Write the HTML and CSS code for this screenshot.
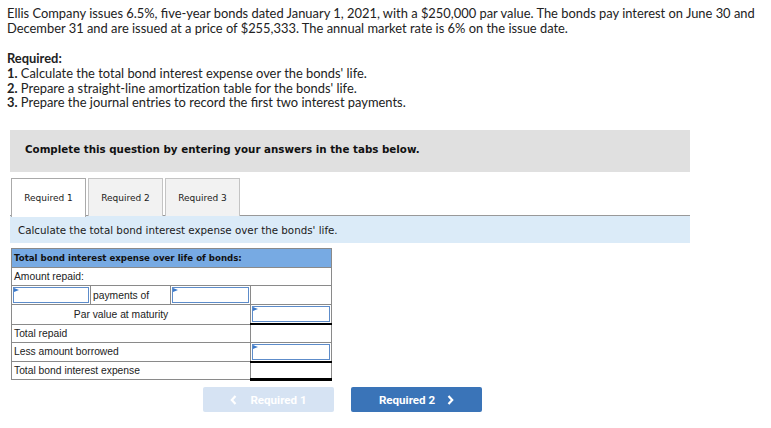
FILE: index.html
```html
<!DOCTYPE html>
<html>
<head>
<meta charset="utf-8">
<link rel="stylesheet" href="styles.css">
</head>
<body>
<div class="page">
  <p class="intro">Ellis Company issues 6.5%, five-year bonds dated January 1, 2021, with a $250,000 par value. The bonds pay interest on June 30 and December 31 and are issued at a price of $255,333. The annual market rate is 6% on the issue date.</p>
  <div class="required">
    <div class="req-title">Required:</div>
    <div><b>1.</b> Calculate the total bond interest expense over the bonds' life.</div>
    <div><b>2.</b> Prepare a straight-line amortization table for the bonds' life.</div>
    <div><b>3.</b> Prepare the journal entries to record the first two interest payments.</div>
  </div>

  <div class="panel">
    <div class="instructions">Complete this question by entering your answers in the tabs below.</div>
    <div class="tabs">
      <div class="tab active">Required 1</div>
      <div class="tab">Required 2</div>
      <div class="tab">Required 3</div>
    </div>
    <div class="band">Calculate the total bond interest expense over the bonds' life.</div>

    <table class="grid">
      <colgroup><col class="c1"><col class="c2"><col class="c3"><col class="c4"></colgroup>
      <tr class="head"><td colspan="4">Total bond interest expense over life of bonds:</td></tr>
      <tr><td colspan="4">Amount repaid:</td></tr>
      <tr>
        <td class="inp"><div class="box"></div></td>
        <td>payments of</td>
        <td class="inp"><div class="box"></div></td>
        <td></td>
      </tr>
      <tr>
        <td colspan="3" class="center">Par value at maturity</td>
        <td class="inp under"><div class="box"></div></td>
      </tr>
      <tr>
        <td colspan="3">Total repaid</td>
        <td></td>
      </tr>
      <tr>
        <td colspan="3">Less amount borrowed</td>
        <td class="inp under"><div class="box"></div></td>
      </tr>
      <tr>
        <td colspan="3">Total bond interest expense</td>
        <td class="final"></td>
      </tr>
    </table>

    <div class="nav">
      <div class="btn disabled"><svg class="chev left" width="7" height="10" viewBox="0 0 7 10"><polyline points="5.5,1 1.8,5 5.5,9" fill="none" stroke="#fff" stroke-width="2.2"/></svg>Required 1</div>
      <div class="btn primary">Required 2<svg class="chev right" width="7" height="10" viewBox="0 0 7 10"><polyline points="1.5,1 5.2,5 1.5,9" fill="none" stroke="#fff" stroke-width="2.2"/></svg></div>
    </div>
  </div>
</div>
</body>
</html>
```

FILE: styles.css
```css
* { box-sizing: border-box; }
body {
  margin: 0;
  background: #fff;
  color: #222;
}
.page {
  padding: 6px 0 0 0;
}
.intro {
  margin: 0 0 0 7px;
  font-family: Lato, "Open Sans", sans-serif;
  font-size: 12.9px;
  line-height: 14.5px;
  width: 760px;
  color: #222;
}
.required {
  margin: 16px 0 0 7px;
  font-family: Lato, "Open Sans", sans-serif;
  font-size: 12.9px;
  line-height: 14.8px;
  color: #222;
}
.req-title { font-weight: bold; }
.required b { font-weight: bold; }

.panel {
  margin: 20px 0 0 10px;
  width: 680px;
}
.instructions {
  background: #e0e0e0;
  height: 42px;
  display: flex;
  align-items: center;
  padding: 0 0 5px 15px;
  font-family: "DejaVu Sans", Verdana, sans-serif;
  font-weight: bold;
  font-size: 10.3px;
  color: #111;
}
.tabs {
  display: flex;
  gap: 2px;
  margin-top: 6px;
  padding-left: 1px;
  height: 38px;
  border-bottom: 1px solid #999;
}
.tab {
  width: 75px;
  height: 38px;
  border: 1px solid #c4c4c4;
  border-bottom: none;
  background: #f2f2f2;
  display: flex;
  align-items: center;
  justify-content: center;
  font-family: "DejaVu Sans", Verdana, sans-serif;
  font-size: 9px;
  color: #1a1a1a;
}
.tab.active {
  background: #fff;
  border-color: #aaa;
  height: 39px;
  margin-bottom: -1px;
}
.band {
  background: #dbebf8;
  height: 27px;
  display: flex;
  align-items: center;
  padding-left: 8px;
  font-family: "DejaVu Sans", Verdana, sans-serif;
  font-size: 10.3px;
  color: #1a1a1a;
}
.grid {
  margin: 5px 0 0 1px;
  border-collapse: collapse;
  border: 1px solid #7a7a7a;
  table-layout: fixed;
  width: 320px;
  font-family: "Liberation Sans", Arial, sans-serif;
  font-size: 10.3px;
  color: #222;
}
.c1 { width: 79px; }
.c2 { width: 80px; }
.c3 { width: 80px; }
.c4 { width: 81px; }
.grid td {
  border: 1px solid #8a8a8a;
  height: 18px;
  padding: 0 2px;
  white-space: nowrap;
}
.grid tr.head td {
  background: #77aae3;
  font-family: "DejaVu Sans", Verdana, sans-serif;
  font-weight: bold;
  font-size: 8.65px;
  color: #111;
  height: 19px;
}
.grid td.center {
  text-align: center;
  padding-right: 22px;
}
.grid td.inp {
  padding: 1px;
}
.box {
  position: relative;
  height: 16px;
  border: 1.5px solid #5d8cca;
  background: #fff;
}
.box::before {
  content: "";
  position: absolute;
  left: 0;
  top: 0;
  border-top: 2px solid transparent;
  border-bottom: 2px solid transparent;
  border-left: 5px solid #3b79c9;
}
.grid td.under {
  border-bottom: 2px solid #000;
}
.grid td.final {
  border-bottom: 3px solid #000;
}

.nav {
  display: flex;
  gap: 17px;
  margin: 6px 0 0 193px;
}
.btn {
  width: 131px;
  height: 25px;
  border-radius: 2px;
  display: flex;
  align-items: center;
  justify-content: center;
  font-family: Roboto, "Liberation Sans", sans-serif;
  font-weight: bold;
  font-size: 11.6px;
  color: #fff;
}
.btn.disabled { background: #d6e3f3; }
.btn.primary { background: #3a74b8; }
.chev { display: block; }
.chev.left { margin-right: 13px; }
.chev.right { margin-left: 12px; }
```
